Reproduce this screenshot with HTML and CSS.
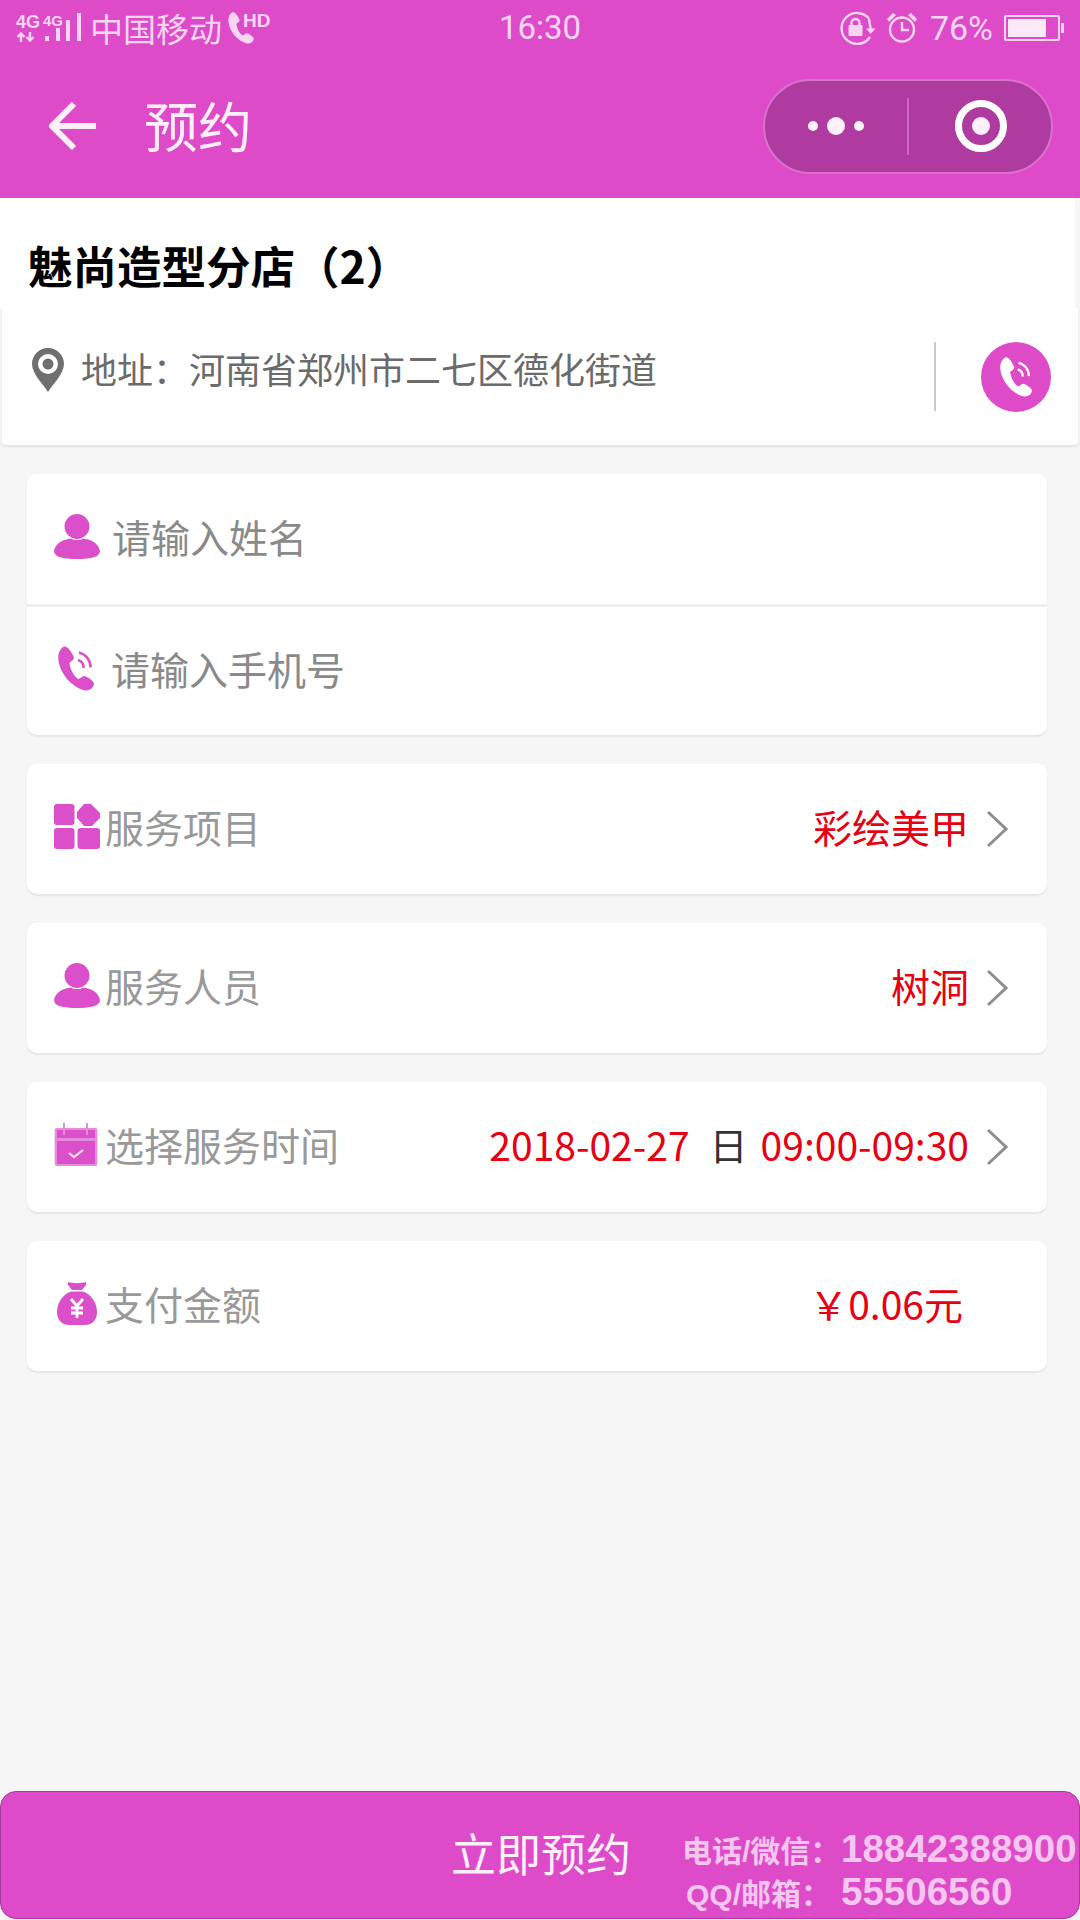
FILE: index.html
```html
<!DOCTYPE html>
<html lang="zh-CN">
<head>
<meta charset="utf-8">
<title>预约</title>
<link rel="stylesheet" href="styles.css">
</head>
<body>
<svg class="defs" width="0" height="0" aria-hidden="true">
  <symbol id="person" viewBox="0 0 46 45">
    <circle cx="23" cy="12.500" r="12.500"/>
    <path d="M0 37C1 30 9 25 17 24.500C20 26.500 26 26.500 29 24.500C37 25 45 30 46 37C46 43 37 45 23 45S0 43 0 37Z"/>
  </symbol>
  <symbol id="handset" viewBox="0 0 36 45">
    <path d="M6 .5C2 2.500-.5 8 .5 15 2.500 28 13 40 25 44c5 1.500 10-1 11-6 .2-3-7.500-8-10-8-2 0-3.500 3-6 3-4-3-7.500-9-8.500-15.500 0-2 4.500-3 4.500-6C14.500 7.500 10-.5 6 .5Z"/>
  </symbol>
  <symbol id="phone" viewBox="0 0 36 45">
    <path d="M6 .5C2 2.500-.5 8 .5 15 2.500 28 13 40 25 44c5 1.500 10-1 11-6 .2-3-7.500-8-10-8-2 0-3.500 3-6 3-4-3-7.500-9-8.500-15.500 0-2 4.500-3 4.500-6C14.500 7.500 10-.5 6 .5Z"/>
    <path class="wave" d="M20 14a8 8 0 0 1 5.500 8"/>
    <path class="wave" d="M21 6.500a15 15 0 0 1 11.500 15"/>
  </symbol>
  <symbol id="chev" viewBox="0 0 22 38">
    <path d="M2 2 20 19 2 36" fill="none" stroke="currentColor" stroke-width="3"/>
  </symbol>
</svg>

<div class="app">
  <header class="top">
    <div class="status">
      <div class="status-left">
        <div class="sig">
          <div class="sim">
            <span class="sig-a">4G</span>
            <svg class="sig-arrows" width="20" height="10" viewBox="0 0 20 10">
              <path d="M5 10V2M1.500 5 5 1.500 8.500 5M14 0v8M10.500 5l3.500 3.500L17.500 5"/>
            </svg>
          </div>
          <div class="sim sim-b">
            <span class="sig-b">4G</span>
          </div>
          <svg class="sig-bars" width="36" height="29" viewBox="0 0 36 29">
            <rect x="0" y="23" width="4" height="5"/>
            <rect x="11" y="15" width="4" height="13"/>
            <rect x="21" y="7" width="4" height="21"/>
            <rect x="32" y="0" width="4" height="28"/>
          </svg>
        </div>
        <span class="carrier">中国移动</span>
        <span class="hd-wrap">
          <svg class="st-phone" width="26" height="32"><use href="#handset"/></svg>
          <span class="hd">HD</span>
        </span>
      </div>
      <div class="time">16:30</div>
      <div class="status-right">
        <svg class="st-lock" width="38" height="34" viewBox="0 0 38 34">
          <path class="st-line" d="M30 7.500A15.500 15.500 0 1 0 31 26"/>
          <path d="M27 17.500h9.500L31.700 23Z"/>
          <path class="st-line" d="M30 8 31.700 18"/>
          <rect x="9.500" y="14" width="14" height="11" rx="1"/>
          <path class="st-line" d="M12.500 15v-3a4 4 0 0 1 8 0v3"/>
        </svg>
        <svg class="st-alarm" width="32" height="34" viewBox="0 0 32 34">
          <circle class="st-line" cx="16" cy="18.500" r="12"/>
          <path class="st-line" d="M16 11v8h7"/>
          <path d="M1 8 7 2l3 2-7 7ZM31 8l-6-6-3 2 7 7Z"/>
        </svg>
        <span class="pct">76%</span>
        <div class="battery"><div class="battery-fill"></div></div>
      </div>
    </div>
    <nav class="nav">
      <svg class="back" width="48" height="48" viewBox="0 0 48 48">
        <path d="M47 24H4M25 2 3 24l22 22" fill="none" stroke="#fdf0fb" stroke-width="6"/>
      </svg>
      <h1 class="page-title">预约</h1>
      <div class="capsule">
        <div class="cap-dots"><i class="dot"></i><i class="dot big"></i><i class="dot"></i></div>
        <i class="cap-sep"></i>
        <div class="cap-ring"><i class="ring-core"></i></div>
      </div>
    </nav>
  </header>

  <section class="shop">
    <h2 class="shop-name">魅尚造型分店（2）</h2>
    <div class="addr">
      <svg class="pin" width="32" height="44" viewBox="0 0 32 44">
        <path fill-rule="evenodd" d="M16 0C7 0 0 7 0 16c0 10 12 21 16 28 4-7 16-18 16-28C32 7 25 0 16 0Zm0 6a10 10 0 1 1 0 20 10 10 0 0 1 0-20Z"/>
        <circle cx="16" cy="16" r="5.500"/>
      </svg>
      <span class="addr-text">地址：河南省郑州市二七区德化街道</span>
      <i class="addr-sep"></i>
      <div class="call">
        <svg class="call-ico" width="32" height="40"><use href="#phone"/></svg>
      </div>
    </div>
  </section>

  <main class="list">
    <div class="card">
      <div class="row row-input">
        <svg class="ico" width="46" height="45"><use href="#person"/></svg>
        <span class="ph">请输入姓名</span>
      </div>
      <div class="row row-input row-top">
        <svg class="ico ico-phone" width="36" height="45"><use href="#phone"/></svg>
        <span class="ph">请输入手机号</span>
      </div>
    </div>

    <div class="card row">
      <svg class="ico" width="46" height="45" viewBox="0 0 46 45">
        <rect x="0" y="0" width="20.500" height="21" rx="3"/>
        <path d="M30 0h7l9 9v5l-8 8h-8l-7-8V8Z"/>
        <rect x="0" y="24" width="20.500" height="21" rx="3"/>
        <rect x="23.500" y="24" width="22.500" height="21" rx="3"/>
      </svg>
      <span class="label">服务项目</span>
      <span class="val">彩绘美甲</span>
      <svg class="chev" width="22" height="38"><use href="#chev"/></svg>
    </div>

    <div class="card row">
      <svg class="ico" width="46" height="45"><use href="#person"/></svg>
      <span class="label">服务人员</span>
      <span class="val">树洞</span>
      <svg class="chev" width="22" height="38"><use href="#chev"/></svg>
    </div>

    <div class="card row">
      <svg class="ico ico-cal" width="44" height="45" viewBox="0 0 44 45">
        <rect x=".7" y="6" width="42.600" height="38" rx="2" fill="#e88ade"/>
        <rect x="3" y="19" width="38" height="23"/>
        <rect x="3" y="8" width="38" height="8"/>
        <path d="M10 1v12M33 1v12" stroke="#e88ade" stroke-width="2" fill="none"/>
        <path d="M15 31l5 4 9-7" stroke="#fbe3f8" stroke-width="2.200" fill="none"/>
      </svg>
      <span class="label">选择服务时间</span>
      <span class="val val-date">2018-02-27</span>
      <span class="weekday">日</span>
      <span class="val">09:00-09:30</span>
      <svg class="chev" width="22" height="38"><use href="#chev"/></svg>
    </div>

    <div class="card row">
      <svg class="ico ico-bag" width="40" height="44" viewBox="0 0 40 44">
        <path d="M11 1c4 1.500 14 1.500 18 0v3l-4 5H15l-4-5Z"/>
        <path d="M14 10.500h12C34 13 40 22 40 31c0 9-6 13-12 13H12C6 44 0 40 0 31 0 22 6 13 14 10.500Z"/>
        <path d="M14 18l6 7 6-7M20 25v12M14 27h12M14 32h12" stroke="#fff" stroke-width="2.800" fill="none"/>
      </svg>
      <span class="label">支付金额</span>
      <span class="val val-price">￥0.06元</span>
    </div>
  </main>

  <footer class="foot">
    <span class="book">立即预约</span>
    <div class="contact">
      <div class="contact-line"><span class="c-label">电话/微信：</span><span class="c-num">18842388900</span></div>
      <div class="contact-line"><span class="c-label c-label-two">QQ/邮箱：</span><span class="c-num">55506560</span></div>
    </div>
  </footer>
</div>
</body>
</html>
```

FILE: styles.css
```css
* { box-sizing: border-box; }
html, body { margin: 0; padding: 0; }
body {
  width: 1080px;
  height: 1920px;
  overflow: hidden;
  background: #f6f6f6;
  font-family: "Noto Sans CJK SC", "Noto Sans", sans-serif;
}
.defs { position: absolute; }
.app {
  width: 1080px;
  height: 1920px;
  display: flex;
  flex-direction: column;
}

/* header */
.top { background: #dd4bc9; height: 198px; color: #f9d5f4; }
.status {
  height: 56px;
  display: grid;
  grid-template-columns: 1fr auto 1fr;
  align-items: center;
  padding: 0 16px;
}
.status-left { display: flex; align-items: center; gap: 6px; }
.sig { display: flex; align-items: flex-end; height: 32px; width: 68px; }
.sim { display: flex; flex-direction: column; align-items: flex-start; height: 32px; }
.sim-b { margin-left: 3px; }
.sig-a { font: 700 18px/20px "Liberation Sans", sans-serif; }
.sig-b { font: 700 15px/18px "Liberation Sans", sans-serif; }
.sig-arrows { fill: none; stroke: #f9d5f4; stroke-width: 2.400; }
.sig-bars { fill: #f9d5f4; margin-left: -18px; margin-bottom: 2px; flex: none; }
.carrier { font-size: 33px; line-height: 40px; }
.hd-wrap { display: flex; align-items: flex-start; }
.st-phone { fill: #f9d5f4; }
.hd { font: 700 19px/20px "Liberation Sans", sans-serif; margin: -1px 0 0 -11px; }
.time { font: 400 33px/40px Roboto, sans-serif; }
.status-right {
  display: flex;
  align-items: center;
  justify-content: flex-end;
  gap: 12px;
}
.st-lock, .st-alarm { fill: #f9d5f4; }
.st-lock { margin-right: -3px; }
.st-line { fill: none; stroke: #f9d5f4; stroke-width: 2.400; }
.pct { font: 400 34px/40px Roboto, sans-serif; margin-right: -1px; }
.battery {
  width: 56px;
  height: 26px;
  border: 2px solid #f9d5f4;
  border-radius: 2px;
  padding: 2px;
  position: relative;
  margin-right: 4px;
}
.battery::after {
  content: "";
  position: absolute;
  right: -6px;
  top: 6px;
  width: 3px;
  height: 10px;
  background: #f9d5f4;
}
.battery-fill { width: 38px; height: 100%; background: #fbeaf9; }

.nav {
  height: 142px;
  display: flex;
  align-items: center;
  padding: 0 27px 2px 49px;
}
.page-title {
  margin: 0 0 2px 47px;
  font-size: 54px;
  line-height: 70px;
  font-weight: 400;
  color: #fdf0fb;
}
.capsule {
  margin-left: auto;
  width: 290px;
  height: 95px;
  border-radius: 48px;
  background: #af3aa0;
  border: 2px solid #d872ca;
  display: flex;
  align-items: center;
}
.cap-dots {
  width: 142px;
  display: flex;
  justify-content: center;
  align-items: center;
  gap: 9px;
}
.dot { width: 10px; height: 10px; border-radius: 50%; background: #fdf0fb; }
.dot.big { width: 18px; height: 18px; }
.cap-sep { width: 2px; height: 57px; background: #cf66c1; }
.cap-ring {
  width: 52px;
  height: 52px;
  margin-left: 46px;
  border: 7px solid #fff;
  border-radius: 50%;
  display: flex;
  align-items: center;
  justify-content: center;
}
.ring-core { width: 18px; height: 18px; border-radius: 50%; background: #fdf0fb; }

/* shop */
.shop { display: flex; flex-direction: column; }
.shop-name {
  margin: 0;
  height: 110px;
  padding: 24px 0 0 28px;
  background: #fff;
  font-size: 44.500px;
  line-height: 86px;
  font-weight: 700;
  color: #000;
  width: 1075px;
}
.addr {
  margin: 0 2px;
  height: 137px;
  background: #fff;
  display: flex;
  align-items: flex-start;
  padding: 34px 27px 0 30px;
  box-shadow: 0 2px 3px rgba(0, 0, 0, .08);
  border-radius: 0 0 4px 4px;
}
.pin { fill: #6f6f6f; margin-top: 6px; flex: none; }
.addr-text {
  margin: -2px 0 0 17px;
  font-size: 36px;
  line-height: 56px;
  color: #6b6b6b;
}
.addr-sep {
  margin-left: auto;
  width: 2px;
  height: 69px;
  background: #c8c8c8;
}
.call {
  margin-left: 45px;
  width: 70px;
  height: 70px;
  border-radius: 50%;
  background: #dd4bc9;
  display: flex;
  align-items: center;
  justify-content: center;
  color: #fff;
}
.call-ico { fill: #fff; }

/* list */
.list {
  display: flex;
  flex-direction: column;
  gap: 29px;
  margin: 29px 33px 0 27px;
  color: #db50ca;
}
.card {
  background: #fff;
  border-radius: 10px;
  box-shadow: 0 2px 2px rgba(0, 0, 0, .07);
}
.row {
  height: 130px;
  display: flex;
  align-items: center;
  padding: 0 0 6px 27px;
}
.row-top { height: 131px; border-top: 3px solid #eeeeee; }
.ico { fill: #db50ca; flex: none; }
.wave { fill: none; stroke: currentColor; stroke-width: 2.600; }
.ico-phone { margin: 0 5px 0 4px; }
.ico-cal { margin-right: 2px; }
.ico-bag { margin: 0 0 0 3px; }
.ph {
  margin-left: 12px;
  font-size: 39px;
  line-height: 56px;
  color: #8a8a8a;
}
.label {
  margin-left: 5px;
  font-size: 39px;
  line-height: 56px;
  color: #999;
}
.ico-bag + .label { margin-left: 8px; }
.val {
  font-size: 39px;
  line-height: 56px;
  color: #e60012;
  margin-left: auto;
}
.weekday + .val { margin-left: 13px; }
.val-price { margin-right: 84px; }
.weekday {
  font-size: 38px;
  line-height: 56px;
  color: #333;
  margin-left: 20px;
}
.chev { color: #8e8e8e; flex: none; margin: 6px 39px 0 17px; }

/* footer */
.foot {
  margin-top: auto;
  height: 128px;
  margin-bottom: 1px;
  background: #dd4bc9;
  border: 1px solid #a83a99;
  border-radius: 16px;
  display: flex;
  align-items: center;
  padding-left: 450px;
}
.book { font-size: 45px; line-height: 60px; color: #fdf0fb; margin-top: -4px; }
.contact {
  margin-left: 51px;
  padding-top: 30px;
  display: flex;
  flex-direction: column;
  color: #f6c6ef;
  white-space: nowrap;
}
.contact-line { display: flex; align-items: baseline; height: 43px; line-height: 43px; }
.c-label {
  width: 159px;
  font-size: 30px;
  font-weight: 700;
  font-family: "Liberation Sans", "Noto Sans CJK SC", sans-serif;
}
.c-label-two { padding-left: 4px; }
.c-num { font: 700 38.500px "Liberation Sans", sans-serif; }
```
